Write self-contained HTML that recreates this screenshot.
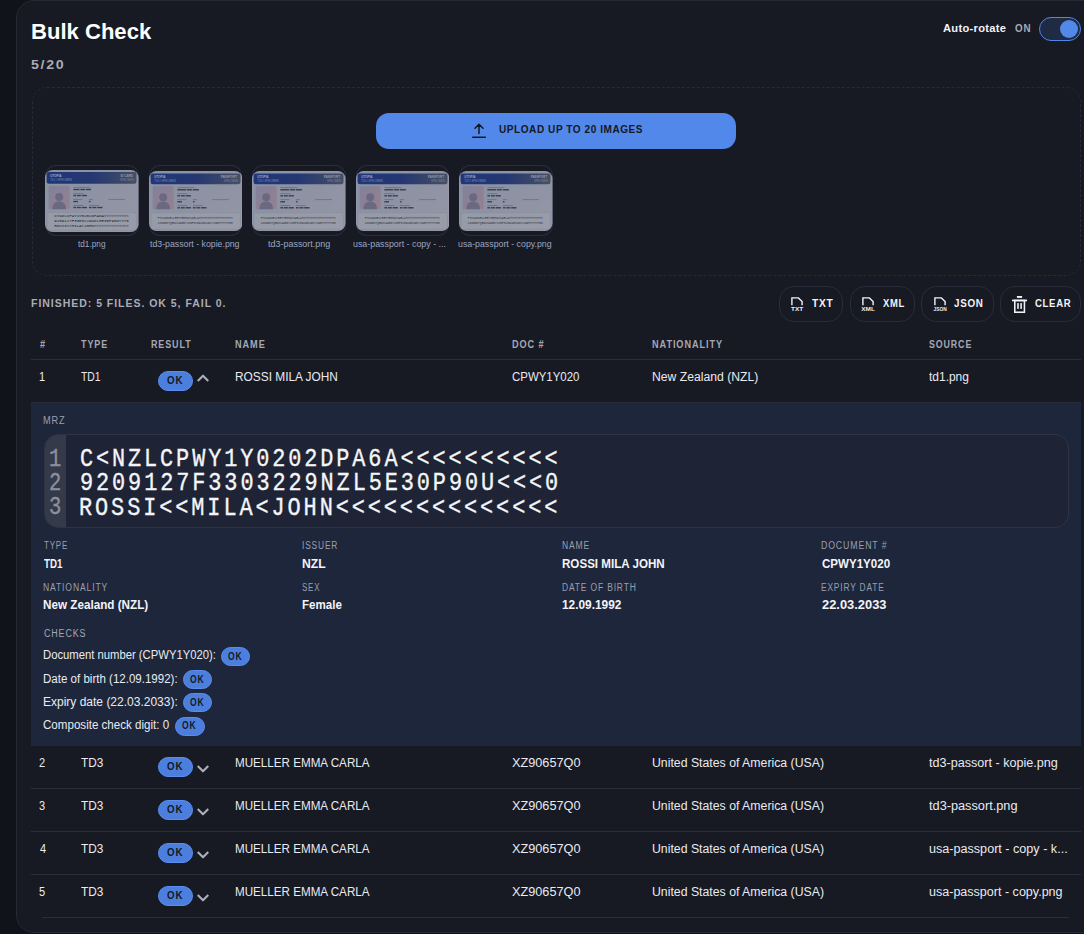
<!DOCTYPE html>
<html lang="en">
<head>
<meta charset="utf-8">
<title>Bulk Check</title>
<style>
*{box-sizing:border-box;margin:0;padding:0}
html,body{width:1084px;height:934px;overflow:hidden;background:#11131a;font-family:"Liberation Sans",sans-serif;color:#e8eaf0}
body{position:relative}
.t{position:absolute;white-space:pre;transform-origin:0 0;display:block}
.a{position:absolute}
#card{left:16px;top:0;width:1100px;height:933px;background:#171923;border:1px solid #262936;border-radius:18px}
#toggle{left:1039px;top:17px;width:42px;height:24px;border-radius:12px;border:1px solid #4f86e8;background:#1f2a44}
#toggle i{position:absolute;right:2px;top:2px;width:18px;height:18px;border-radius:50%;background:#5288e8}
#drop{left:32px;top:87px;width:1049px;height:189px;border:1px dashed #272a37;border-radius:15px}
#upload{left:376px;top:113px;width:360px;height:36px;border-radius:13px;background:#5288ea}
.thumb{top:165px;width:93.500px;height:71px;border-radius:11px;box-shadow:inset 0 0 0 1px #2a2d3b;background:#171923;overflow:hidden}
.btn{top:286px;height:36px;border:1px solid #292c3a;border-radius:15px;background:#171923}
.hl{left:31px;width:1049.500px;height:1px;background:#2a2d3b}
.ok{width:35px;height:20.500px;border-radius:10.250px;background:#4c7fdd;border:1px solid #5a8dee}
.oks{width:29.500px;height:19px;border-radius:9.500px;background:#4c7fdd;border:1px solid #5a8dee}
#panel{left:31px;top:402px;width:1050px;height:344px;background:#1e263b;border-top:1px solid #282c3a}
#mrz{left:43.500px;top:434px;width:1025px;height:93.500px;border:1px solid #2f3442;border-radius:14px;background:#1e2435;overflow:hidden}
#gut{left:0;top:0;width:21px;height:100%;background:#353a4a}
</style>
</head>
<body>
<main>
<div class="a" id="card"></div>
<div class="a" id="toggle"><i></i></div>
<div class="a" id="drop"></div>
<div class="a" id="upload"></div>
<svg class="a" style="left:471px;top:122px" width="16" height="18" viewBox="0 0 16 18" fill="none" stroke="#141824" stroke-width="1.500" stroke-linecap="round" stroke-linejoin="round"><path d="M8 11.500V2.500M4 6.300L8 2.300l4 4M1.700 15.300h12.600"/></svg>
<div class="a thumb" style="left:45px"><svg class="a" style="left:0;top:5px;opacity:.72" width="93.5" height="62" viewBox="0 0 93 62" preserveAspectRatio="none">
<defs>
<linearGradient id="h0" x1="0" x2="1" y1="0" y2="0"><stop offset="0" stop-color="#27429a"/><stop offset=".5" stop-color="#2a4392"/><stop offset="1" stop-color="#5b657e"/></linearGradient>
<linearGradient id="p0" x1="0" x2="1" y1="0" y2="1"><stop offset="0" stop-color="#a9a9cb"/><stop offset="1" stop-color="#c9a8b9"/></linearGradient>
<linearGradient id="b0" x1="0" x2="1" y1="0" y2="1"><stop offset="0" stop-color="#b4c0d6"/><stop offset="1" stop-color="#c6c6d8"/></linearGradient>
</defs>
<rect x="0" y="0" width="93" height="62" rx="7.5" fill="url(#b0)"/>
<rect x="1.6" y="2" width="89.4" height="11.75" rx="2.2" fill="url(#h0)"/>
<text transform="translate(5.2 6.7) scale(.1)" font-family="Liberation Sans" font-weight="bold" font-size="30" fill="#d5defa">UTOPIA</text>
<text transform="translate(5.2 10.7) scale(.1)" font-family="Liberation Sans" font-size="27" fill="#9fb2f0">TD1 / SPECIMEN</text>
<text transform="translate(87.5 6.7) scale(.1)" text-anchor="end" font-family="Liberation Sans" font-weight="bold" font-size="30" fill="#d3d8e8" opacity=".9">ID CARD</text>
<text transform="translate(88.5 10.7) scale(.1)" text-anchor="end" font-family="Liberation Sans" font-size="27" fill="#b9c1d9" opacity=".75">SPECIMEN</text>
<rect x="3.75" y="15.75" width="20.8" height="23.5" rx="1.6" fill="url(#p0)"/>
<circle cx="14.1" cy="26.95" r="4" fill="#8d88a8"/>
<path d="M7.300 39.25c0-5.600 3-7.800 6.800-7.800s6.800 2.200 6.800 7.800z" fill="#8d88a8"/>
<rect x="28.2" y="16.95" width="17" height=".9" fill="#6f7790" opacity=".6"/><rect x="28.20" y="18.85" width="6.16" height="1.35" fill="#1a1f30" opacity=".72"/><rect x="35.10" y="18.85" width="4.93" height="1.35" fill="#1a1f30" opacity=".72"/><rect x="40.77" y="18.85" width="4.93" height="1.35" fill="#1a1f30" opacity=".72"/>
<rect x="28.2" y="22.95" width="10" height=".9" fill="#6f7790" opacity=".6"/><rect x="28.20" y="24.85" width="2.65" height="1.35" fill="#1a1f30" opacity=".72"/><rect x="31.64" y="24.85" width="3.97" height="1.35" fill="#1a1f30" opacity=".72"/><rect x="36.41" y="24.85" width="5.29" height="1.35" fill="#1a1f30" opacity=".72"/>
<rect x="28.2" y="28.95" width="9" height=".9" fill="#6f7790" opacity=".6"/><rect x="28.20" y="30.85" width="4.60" height="1.35" fill="#1a1f30" opacity=".72"/>
<rect x="43.7" y="28.95" width="4" height=".9" fill="#6f7790" opacity=".6"/><rect x="43.70" y="30.85" width="1.60" height="1.35" fill="#1a1f30" opacity=".72"/>
<rect x="63" y="28.95" width="16.5" height=".9" fill="#6f7790" opacity=".6"/>
<rect x="28.2" y="34.95" width="10" height=".9" fill="#6f7790" opacity=".6"/><rect x="28.20" y="36.85" width="2.65" height="1.35" fill="#1a1f30" opacity=".72"/><rect x="31.64" y="36.85" width="3.97" height="1.35" fill="#1a1f30" opacity=".72"/><rect x="36.41" y="36.85" width="5.29" height="1.35" fill="#1a1f30" opacity=".72"/>
<rect x="43.7" y="34.95" width="10" height=".9" fill="#6f7790" opacity=".6"/><rect x="43.70" y="36.85" width="2.65" height="1.35" fill="#1a1f30" opacity=".72"/><rect x="47.14" y="36.85" width="3.97" height="1.35" fill="#1a1f30" opacity=".72"/><rect x="51.91" y="36.85" width="5.29" height="1.35" fill="#1a1f30" opacity=".72"/>
<rect x="2" y="42.5" width="88.8" height="17.5" rx="1.8" fill="#d3d6e2" opacity=".55" stroke="#9aa1b6" stroke-width=".4"/>
<text transform="translate(9.2 47.3) scale(.1)" textLength="742.0" lengthAdjust="spacingAndGlyphs" font-family="Liberation Mono" font-size="43.0" fill="#10141f" opacity="0.95">C&lt;NZLCPWY1Y0202DPA6A&lt;&lt;&lt;&lt;&lt;&lt;&lt;&lt;&lt;&lt;</text><text transform="translate(9.2 52.1) scale(.1)" textLength="742.0" lengthAdjust="spacingAndGlyphs" font-family="Liberation Mono" font-size="43.0" fill="#10141f" opacity="0.95">9209127F3303229NZL5E30P90U&lt;&lt;&lt;0</text><text transform="translate(9.2 57.0) scale(.1)" textLength="742.0" lengthAdjust="spacingAndGlyphs" font-family="Liberation Mono" font-size="43.0" fill="#10141f" opacity="0.95">ROSSI&lt;&lt;MILA&lt;JOHN&lt;&lt;&lt;&lt;&lt;&lt;&lt;&lt;&lt;&lt;&lt;&lt;&lt;&lt;</text>
</svg></div>
<div class="a thumb" style="left:148.5px"><svg class="a" style="left:0;top:6px;opacity:.72" width="93.5" height="60" viewBox="0 0 93 60" preserveAspectRatio="none">
<defs>
<linearGradient id="h1" x1="0" x2="1" y1="0" y2="0"><stop offset="0" stop-color="#27429a"/><stop offset=".5" stop-color="#2a4392"/><stop offset="1" stop-color="#5b657e"/></linearGradient>
<linearGradient id="p1" x1="0" x2="1" y1="0" y2="1"><stop offset="0" stop-color="#a9a9cb"/><stop offset="1" stop-color="#c9a8b9"/></linearGradient>
<linearGradient id="b1" x1="0" x2="1" y1="0" y2="1"><stop offset="0" stop-color="#b4c0d6"/><stop offset="1" stop-color="#c6c6d8"/></linearGradient>
</defs>
<rect x="0" y="0" width="93" height="60" rx="7.5" fill="url(#b1)"/>
<rect x="1.6" y="2.5" width="89.4" height="10.75" rx="2.2" fill="url(#h1)"/>
<text transform="translate(5.2 7.2) scale(.1)" font-family="Liberation Sans" font-weight="bold" font-size="30" fill="#d5defa">UTOPIA</text>
<text transform="translate(5.2 11.2) scale(.1)" font-family="Liberation Sans" font-size="27" fill="#9fb2f0">TD3 / SPECIMEN</text>
<text transform="translate(87.5 7.2) scale(.1)" text-anchor="end" font-family="Liberation Sans" font-weight="bold" font-size="30" fill="#d3d8e8" opacity=".9">PASSPORT</text>
<text transform="translate(88.5 11.2) scale(.1)" text-anchor="end" font-family="Liberation Sans" font-size="27" fill="#b9c1d9" opacity=".75">SPECIMEN</text>
<rect x="3.75" y="15" width="20.8" height="23.25" rx="1.6" fill="url(#p1)"/>
<circle cx="14.1" cy="26.2" r="4" fill="#8d88a8"/>
<path d="M7.300 38.25c0-5.600 3-7.800 6.800-7.800s6.800 2.200 6.800 7.800z" fill="#8d88a8"/>
<rect x="28.2" y="16.2" width="17" height=".9" fill="#6f7790" opacity=".6"/><rect x="28.20" y="18.10" width="8.75" height="1.35" fill="#1a1f30" opacity=".72"/><rect x="37.70" y="18.10" width="5.00" height="1.35" fill="#1a1f30" opacity=".72"/><rect x="43.45" y="18.10" width="6.25" height="1.35" fill="#1a1f30" opacity=".72"/>
<rect x="28.2" y="22.2" width="10" height=".9" fill="#6f7790" opacity=".6"/><rect x="28.20" y="24.10" width="2.65" height="1.35" fill="#1a1f30" opacity=".72"/><rect x="31.64" y="24.10" width="3.97" height="1.35" fill="#1a1f30" opacity=".72"/><rect x="36.41" y="24.10" width="5.29" height="1.35" fill="#1a1f30" opacity=".72"/>
<rect x="28.2" y="28.2" width="9" height=".9" fill="#6f7790" opacity=".6"/><rect x="28.20" y="30.10" width="4.60" height="1.35" fill="#1a1f30" opacity=".72"/>
<rect x="43.7" y="28.2" width="4" height=".9" fill="#6f7790" opacity=".6"/><rect x="43.70" y="30.10" width="1.60" height="1.35" fill="#1a1f30" opacity=".72"/>
<rect x="63" y="28.2" width="16.5" height=".9" fill="#6f7790" opacity=".6"/>
<rect x="28.2" y="34.2" width="10" height=".9" fill="#6f7790" opacity=".6"/><rect x="28.20" y="36.10" width="2.65" height="1.35" fill="#1a1f30" opacity=".72"/><rect x="31.64" y="36.10" width="3.97" height="1.35" fill="#1a1f30" opacity=".72"/><rect x="36.41" y="36.10" width="5.29" height="1.35" fill="#1a1f30" opacity=".72"/>
<rect x="43.7" y="34.2" width="10" height=".9" fill="#6f7790" opacity=".6"/><rect x="43.70" y="36.10" width="2.65" height="1.35" fill="#1a1f30" opacity=".72"/><rect x="47.14" y="36.10" width="3.97" height="1.35" fill="#1a1f30" opacity=".72"/><rect x="51.91" y="36.10" width="5.29" height="1.35" fill="#1a1f30" opacity=".72"/>
<rect x="2" y="41.75" width="88.8" height="16.5" rx="1.8" fill="#d3d6e2" opacity=".55" stroke="#9aa1b6" stroke-width=".4"/>
<text transform="translate(8.75 47.7) scale(.1)" textLength="745.0" lengthAdjust="spacingAndGlyphs" font-family="Liberation Mono" font-size="29.0" fill="#10141f" opacity="0.8">P&lt;USAMUELLER&lt;&lt;EMMA&lt;CARLA&lt;&lt;&lt;&lt;&lt;&lt;&lt;&lt;&lt;&lt;&lt;&lt;&lt;&lt;&lt;&lt;&lt;&lt;&lt;&lt;</text><text transform="translate(8.75 52.7) scale(.1)" textLength="745.0" lengthAdjust="spacingAndGlyphs" font-family="Liberation Mono" font-size="29.0" fill="#10141f" opacity="0.8">XZ90657Q00USA9007266F3109290SAMLYUWM&lt;&lt;&lt;&lt;&lt;&lt;08</text>
</svg></div>
<div class="a thumb" style="left:252px"><svg class="a" style="left:0;top:6px;opacity:.72" width="93.5" height="60" viewBox="0 0 93 60" preserveAspectRatio="none">
<defs>
<linearGradient id="h2" x1="0" x2="1" y1="0" y2="0"><stop offset="0" stop-color="#27429a"/><stop offset=".5" stop-color="#2a4392"/><stop offset="1" stop-color="#5b657e"/></linearGradient>
<linearGradient id="p2" x1="0" x2="1" y1="0" y2="1"><stop offset="0" stop-color="#a9a9cb"/><stop offset="1" stop-color="#c9a8b9"/></linearGradient>
<linearGradient id="b2" x1="0" x2="1" y1="0" y2="1"><stop offset="0" stop-color="#b4c0d6"/><stop offset="1" stop-color="#c6c6d8"/></linearGradient>
</defs>
<rect x="0" y="0" width="93" height="60" rx="7.5" fill="url(#b2)"/>
<rect x="1.6" y="2.5" width="89.4" height="10.75" rx="2.2" fill="url(#h2)"/>
<text transform="translate(5.2 7.2) scale(.1)" font-family="Liberation Sans" font-weight="bold" font-size="30" fill="#d5defa">UTOPIA</text>
<text transform="translate(5.2 11.2) scale(.1)" font-family="Liberation Sans" font-size="27" fill="#9fb2f0">TD3 / SPECIMEN</text>
<text transform="translate(87.5 7.2) scale(.1)" text-anchor="end" font-family="Liberation Sans" font-weight="bold" font-size="30" fill="#d3d8e8" opacity=".9">PASSPORT</text>
<text transform="translate(88.5 11.2) scale(.1)" text-anchor="end" font-family="Liberation Sans" font-size="27" fill="#b9c1d9" opacity=".75">SPECIMEN</text>
<rect x="3.75" y="15" width="20.8" height="23.25" rx="1.6" fill="url(#p2)"/>
<circle cx="14.1" cy="26.2" r="4" fill="#8d88a8"/>
<path d="M7.300 38.25c0-5.600 3-7.800 6.800-7.800s6.800 2.200 6.800 7.800z" fill="#8d88a8"/>
<rect x="28.2" y="16.2" width="17" height=".9" fill="#6f7790" opacity=".6"/><rect x="28.20" y="18.10" width="8.75" height="1.35" fill="#1a1f30" opacity=".72"/><rect x="37.70" y="18.10" width="5.00" height="1.35" fill="#1a1f30" opacity=".72"/><rect x="43.45" y="18.10" width="6.25" height="1.35" fill="#1a1f30" opacity=".72"/>
<rect x="28.2" y="22.2" width="10" height=".9" fill="#6f7790" opacity=".6"/><rect x="28.20" y="24.10" width="2.65" height="1.35" fill="#1a1f30" opacity=".72"/><rect x="31.64" y="24.10" width="3.97" height="1.35" fill="#1a1f30" opacity=".72"/><rect x="36.41" y="24.10" width="5.29" height="1.35" fill="#1a1f30" opacity=".72"/>
<rect x="28.2" y="28.2" width="9" height=".9" fill="#6f7790" opacity=".6"/><rect x="28.20" y="30.10" width="4.60" height="1.35" fill="#1a1f30" opacity=".72"/>
<rect x="43.7" y="28.2" width="4" height=".9" fill="#6f7790" opacity=".6"/><rect x="43.70" y="30.10" width="1.60" height="1.35" fill="#1a1f30" opacity=".72"/>
<rect x="63" y="28.2" width="16.5" height=".9" fill="#6f7790" opacity=".6"/>
<rect x="28.2" y="34.2" width="10" height=".9" fill="#6f7790" opacity=".6"/><rect x="28.20" y="36.10" width="2.65" height="1.35" fill="#1a1f30" opacity=".72"/><rect x="31.64" y="36.10" width="3.97" height="1.35" fill="#1a1f30" opacity=".72"/><rect x="36.41" y="36.10" width="5.29" height="1.35" fill="#1a1f30" opacity=".72"/>
<rect x="43.7" y="34.2" width="10" height=".9" fill="#6f7790" opacity=".6"/><rect x="43.70" y="36.10" width="2.65" height="1.35" fill="#1a1f30" opacity=".72"/><rect x="47.14" y="36.10" width="3.97" height="1.35" fill="#1a1f30" opacity=".72"/><rect x="51.91" y="36.10" width="5.29" height="1.35" fill="#1a1f30" opacity=".72"/>
<rect x="2" y="41.75" width="88.8" height="16.5" rx="1.8" fill="#d3d6e2" opacity=".55" stroke="#9aa1b6" stroke-width=".4"/>
<text transform="translate(8.75 47.7) scale(.1)" textLength="745.0" lengthAdjust="spacingAndGlyphs" font-family="Liberation Mono" font-size="29.0" fill="#10141f" opacity="0.8">P&lt;USAMUELLER&lt;&lt;EMMA&lt;CARLA&lt;&lt;&lt;&lt;&lt;&lt;&lt;&lt;&lt;&lt;&lt;&lt;&lt;&lt;&lt;&lt;&lt;&lt;&lt;&lt;</text><text transform="translate(8.75 52.7) scale(.1)" textLength="745.0" lengthAdjust="spacingAndGlyphs" font-family="Liberation Mono" font-size="29.0" fill="#10141f" opacity="0.8">XZ90657Q00USA9007266F3109290SAMLYUWM&lt;&lt;&lt;&lt;&lt;&lt;08</text>
</svg></div>
<div class="a thumb" style="left:355.5px"><svg class="a" style="left:0;top:6px;opacity:.72" width="93.5" height="60" viewBox="0 0 93 60" preserveAspectRatio="none">
<defs>
<linearGradient id="h3" x1="0" x2="1" y1="0" y2="0"><stop offset="0" stop-color="#27429a"/><stop offset=".5" stop-color="#2a4392"/><stop offset="1" stop-color="#5b657e"/></linearGradient>
<linearGradient id="p3" x1="0" x2="1" y1="0" y2="1"><stop offset="0" stop-color="#a9a9cb"/><stop offset="1" stop-color="#c9a8b9"/></linearGradient>
<linearGradient id="b3" x1="0" x2="1" y1="0" y2="1"><stop offset="0" stop-color="#b4c0d6"/><stop offset="1" stop-color="#c6c6d8"/></linearGradient>
</defs>
<rect x="0" y="0" width="93" height="60" rx="7.5" fill="url(#b3)"/>
<rect x="1.6" y="2.5" width="89.4" height="10.75" rx="2.2" fill="url(#h3)"/>
<text transform="translate(5.2 7.2) scale(.1)" font-family="Liberation Sans" font-weight="bold" font-size="30" fill="#d5defa">UTOPIA</text>
<text transform="translate(5.2 11.2) scale(.1)" font-family="Liberation Sans" font-size="27" fill="#9fb2f0">TD3 / SPECIMEN</text>
<text transform="translate(87.5 7.2) scale(.1)" text-anchor="end" font-family="Liberation Sans" font-weight="bold" font-size="30" fill="#d3d8e8" opacity=".9">PASSPORT</text>
<text transform="translate(88.5 11.2) scale(.1)" text-anchor="end" font-family="Liberation Sans" font-size="27" fill="#b9c1d9" opacity=".75">SPECIMEN</text>
<rect x="3.75" y="15" width="20.8" height="23.25" rx="1.6" fill="url(#p3)"/>
<circle cx="14.1" cy="26.2" r="4" fill="#8d88a8"/>
<path d="M7.300 38.25c0-5.600 3-7.800 6.800-7.800s6.800 2.200 6.800 7.800z" fill="#8d88a8"/>
<rect x="28.2" y="16.2" width="17" height=".9" fill="#6f7790" opacity=".6"/><rect x="28.20" y="18.10" width="8.75" height="1.35" fill="#1a1f30" opacity=".72"/><rect x="37.70" y="18.10" width="5.00" height="1.35" fill="#1a1f30" opacity=".72"/><rect x="43.45" y="18.10" width="6.25" height="1.35" fill="#1a1f30" opacity=".72"/>
<rect x="28.2" y="22.2" width="10" height=".9" fill="#6f7790" opacity=".6"/><rect x="28.20" y="24.10" width="2.65" height="1.35" fill="#1a1f30" opacity=".72"/><rect x="31.64" y="24.10" width="3.97" height="1.35" fill="#1a1f30" opacity=".72"/><rect x="36.41" y="24.10" width="5.29" height="1.35" fill="#1a1f30" opacity=".72"/>
<rect x="28.2" y="28.2" width="9" height=".9" fill="#6f7790" opacity=".6"/><rect x="28.20" y="30.10" width="4.60" height="1.35" fill="#1a1f30" opacity=".72"/>
<rect x="43.7" y="28.2" width="4" height=".9" fill="#6f7790" opacity=".6"/><rect x="43.70" y="30.10" width="1.60" height="1.35" fill="#1a1f30" opacity=".72"/>
<rect x="63" y="28.2" width="16.5" height=".9" fill="#6f7790" opacity=".6"/>
<rect x="28.2" y="34.2" width="10" height=".9" fill="#6f7790" opacity=".6"/><rect x="28.20" y="36.10" width="2.65" height="1.35" fill="#1a1f30" opacity=".72"/><rect x="31.64" y="36.10" width="3.97" height="1.35" fill="#1a1f30" opacity=".72"/><rect x="36.41" y="36.10" width="5.29" height="1.35" fill="#1a1f30" opacity=".72"/>
<rect x="43.7" y="34.2" width="10" height=".9" fill="#6f7790" opacity=".6"/><rect x="43.70" y="36.10" width="2.65" height="1.35" fill="#1a1f30" opacity=".72"/><rect x="47.14" y="36.10" width="3.97" height="1.35" fill="#1a1f30" opacity=".72"/><rect x="51.91" y="36.10" width="5.29" height="1.35" fill="#1a1f30" opacity=".72"/>
<rect x="2" y="41.75" width="88.8" height="16.5" rx="1.8" fill="#d3d6e2" opacity=".55" stroke="#9aa1b6" stroke-width=".4"/>
<text transform="translate(8.75 47.7) scale(.1)" textLength="745.0" lengthAdjust="spacingAndGlyphs" font-family="Liberation Mono" font-size="29.0" fill="#10141f" opacity="0.8">P&lt;USAMUELLER&lt;&lt;EMMA&lt;CARLA&lt;&lt;&lt;&lt;&lt;&lt;&lt;&lt;&lt;&lt;&lt;&lt;&lt;&lt;&lt;&lt;&lt;&lt;&lt;&lt;</text><text transform="translate(8.75 52.7) scale(.1)" textLength="745.0" lengthAdjust="spacingAndGlyphs" font-family="Liberation Mono" font-size="29.0" fill="#10141f" opacity="0.8">XZ90657Q00USA9007266F3109290SAMLYUWM&lt;&lt;&lt;&lt;&lt;&lt;08</text>
</svg></div>
<div class="a thumb" style="left:459px"><svg class="a" style="left:0;top:6px;opacity:.72" width="93.5" height="60" viewBox="0 0 93 60" preserveAspectRatio="none">
<defs>
<linearGradient id="h4" x1="0" x2="1" y1="0" y2="0"><stop offset="0" stop-color="#27429a"/><stop offset=".5" stop-color="#2a4392"/><stop offset="1" stop-color="#5b657e"/></linearGradient>
<linearGradient id="p4" x1="0" x2="1" y1="0" y2="1"><stop offset="0" stop-color="#a9a9cb"/><stop offset="1" stop-color="#c9a8b9"/></linearGradient>
<linearGradient id="b4" x1="0" x2="1" y1="0" y2="1"><stop offset="0" stop-color="#b4c0d6"/><stop offset="1" stop-color="#c6c6d8"/></linearGradient>
</defs>
<rect x="0" y="0" width="93" height="60" rx="7.5" fill="url(#b4)"/>
<rect x="1.6" y="2.5" width="89.4" height="10.75" rx="2.2" fill="url(#h4)"/>
<text transform="translate(5.2 7.2) scale(.1)" font-family="Liberation Sans" font-weight="bold" font-size="30" fill="#d5defa">UTOPIA</text>
<text transform="translate(5.2 11.2) scale(.1)" font-family="Liberation Sans" font-size="27" fill="#9fb2f0">TD3 / SPECIMEN</text>
<text transform="translate(87.5 7.2) scale(.1)" text-anchor="end" font-family="Liberation Sans" font-weight="bold" font-size="30" fill="#d3d8e8" opacity=".9">PASSPORT</text>
<text transform="translate(88.5 11.2) scale(.1)" text-anchor="end" font-family="Liberation Sans" font-size="27" fill="#b9c1d9" opacity=".75">SPECIMEN</text>
<rect x="3.75" y="15" width="20.8" height="23.25" rx="1.6" fill="url(#p4)"/>
<circle cx="14.1" cy="26.2" r="4" fill="#8d88a8"/>
<path d="M7.300 38.25c0-5.600 3-7.800 6.800-7.800s6.800 2.200 6.800 7.800z" fill="#8d88a8"/>
<rect x="28.2" y="16.2" width="17" height=".9" fill="#6f7790" opacity=".6"/><rect x="28.20" y="18.10" width="8.75" height="1.35" fill="#1a1f30" opacity=".72"/><rect x="37.70" y="18.10" width="5.00" height="1.35" fill="#1a1f30" opacity=".72"/><rect x="43.45" y="18.10" width="6.25" height="1.35" fill="#1a1f30" opacity=".72"/>
<rect x="28.2" y="22.2" width="10" height=".9" fill="#6f7790" opacity=".6"/><rect x="28.20" y="24.10" width="2.65" height="1.35" fill="#1a1f30" opacity=".72"/><rect x="31.64" y="24.10" width="3.97" height="1.35" fill="#1a1f30" opacity=".72"/><rect x="36.41" y="24.10" width="5.29" height="1.35" fill="#1a1f30" opacity=".72"/>
<rect x="28.2" y="28.2" width="9" height=".9" fill="#6f7790" opacity=".6"/><rect x="28.20" y="30.10" width="4.60" height="1.35" fill="#1a1f30" opacity=".72"/>
<rect x="43.7" y="28.2" width="4" height=".9" fill="#6f7790" opacity=".6"/><rect x="43.70" y="30.10" width="1.60" height="1.35" fill="#1a1f30" opacity=".72"/>
<rect x="63" y="28.2" width="16.5" height=".9" fill="#6f7790" opacity=".6"/>
<rect x="28.2" y="34.2" width="10" height=".9" fill="#6f7790" opacity=".6"/><rect x="28.20" y="36.10" width="2.65" height="1.35" fill="#1a1f30" opacity=".72"/><rect x="31.64" y="36.10" width="3.97" height="1.35" fill="#1a1f30" opacity=".72"/><rect x="36.41" y="36.10" width="5.29" height="1.35" fill="#1a1f30" opacity=".72"/>
<rect x="43.7" y="34.2" width="10" height=".9" fill="#6f7790" opacity=".6"/><rect x="43.70" y="36.10" width="2.65" height="1.35" fill="#1a1f30" opacity=".72"/><rect x="47.14" y="36.10" width="3.97" height="1.35" fill="#1a1f30" opacity=".72"/><rect x="51.91" y="36.10" width="5.29" height="1.35" fill="#1a1f30" opacity=".72"/>
<rect x="2" y="41.75" width="88.8" height="16.5" rx="1.8" fill="#d3d6e2" opacity=".55" stroke="#9aa1b6" stroke-width=".4"/>
<text transform="translate(8.75 47.7) scale(.1)" textLength="745.0" lengthAdjust="spacingAndGlyphs" font-family="Liberation Mono" font-size="29.0" fill="#10141f" opacity="0.8">P&lt;USAMUELLER&lt;&lt;EMMA&lt;CARLA&lt;&lt;&lt;&lt;&lt;&lt;&lt;&lt;&lt;&lt;&lt;&lt;&lt;&lt;&lt;&lt;&lt;&lt;&lt;&lt;</text><text transform="translate(8.75 52.7) scale(.1)" textLength="745.0" lengthAdjust="spacingAndGlyphs" font-family="Liberation Mono" font-size="29.0" fill="#10141f" opacity="0.8">XZ90657Q00USA9007266F3109290SAMLYUWM&lt;&lt;&lt;&lt;&lt;&lt;08</text>
</svg></div>
<div class="a btn" style="left:779px;width:64px"></div>
<div class="a btn" style="left:850px;width:65px"></div>
<div class="a btn" style="left:921px;width:73px"></div>
<div class="a btn" style="left:1000px;width:81px"></div>
<svg class="a" style="left:788.3px;top:295px" width="18" height="18" viewBox="0 0 18 18"><path d="M3.900 10.200V2.900h6.500l3.700 3.700v3.600" fill="none" stroke="#f1f2f5" stroke-width="1.4"/><text x="9.100" y="16.050" text-anchor="middle" textLength="12.2" lengthAdjust="spacingAndGlyphs" font-family="Liberation Sans" font-weight="bold" font-size="5.5" fill="#f1f2f5">TXT</text></svg>
<svg class="a" style="left:858.6px;top:295px" width="18" height="18" viewBox="0 0 18 18"><path d="M3.900 10.200V2.900h6.500l3.700 3.700v3.600" fill="none" stroke="#f1f2f5" stroke-width="1.4"/><text x="9.100" y="16.050" text-anchor="middle" textLength="13.6" lengthAdjust="spacingAndGlyphs" font-family="Liberation Sans" font-weight="bold" font-size="5.5" fill="#f1f2f5">XML</text></svg>
<svg class="a" style="left:930.7px;top:295px" width="18" height="18" viewBox="0 0 18 18"><path d="M3.900 10.200V2.900h6.500l3.700 3.700v3.600" fill="none" stroke="#f1f2f5" stroke-width="1.4"/><text x="9.100" y="16.050" text-anchor="middle" textLength="13.2" lengthAdjust="spacingAndGlyphs" font-family="Liberation Sans" font-weight="bold" font-size="5.3" fill="#f1f2f5">JSON</text></svg>
<svg class="a" style="left:1010px;top:294px" width="20" height="22" viewBox="0 0 20 22" fill="#f1f2f5"><rect x="6.900" y="2" width="5.200" height="1.900"/><rect x="2" y="5.600" width="15" height="1.700"/><rect x="4.780" y="6.500" width="9.650" height="11.730" fill="none" stroke="#f1f2f5" stroke-width="1.550"/><rect x="7.200" y="9.100" width="1.600" height="5.800"/><rect x="10.300" y="9.100" width="1.600" height="5.800"/></svg>
<div class="a hl" style="top:359px"></div>
<div class="a hl" style="top:788px"></div>
<div class="a hl" style="top:831px"></div>
<div class="a hl" style="top:874px"></div>
<div class="a hl" style="top:917px;left:42px;width:1027px"></div>
<div class="a" id="panel"></div>
<div class="a" id="mrz"><div class="a" id="gut"></div></div>
<div class="a ok" style="left:158px;top:370.750px"></div>
<svg class="a" style="left:196.2px;top:373.4px" width="14" height="10" viewBox="0 0 14 10" fill="none" stroke="#adb0bc" stroke-width="2.100" stroke-linecap="square" stroke-linejoin="round"><path d="M2.500 7.200L7 2.700l4.500 4.500"/></svg>
<div class="a ok" style="left:158px;top:756.75px"></div>
<svg class="a" style="left:196.2px;top:764.25px" width="14" height="10" viewBox="0 0 14 10" fill="none" stroke="#adb0bc" stroke-width="2.100" stroke-linecap="square" stroke-linejoin="round"><path d="M2.500 2.800L7 7.300l4.500-4.500"/></svg>
<div class="a ok" style="left:158px;top:799.75px"></div>
<svg class="a" style="left:196.2px;top:807.25px" width="14" height="10" viewBox="0 0 14 10" fill="none" stroke="#adb0bc" stroke-width="2.100" stroke-linecap="square" stroke-linejoin="round"><path d="M2.500 2.800L7 7.300l4.500-4.500"/></svg>
<div class="a ok" style="left:158px;top:842.75px"></div>
<svg class="a" style="left:196.2px;top:850.25px" width="14" height="10" viewBox="0 0 14 10" fill="none" stroke="#adb0bc" stroke-width="2.100" stroke-linecap="square" stroke-linejoin="round"><path d="M2.500 2.800L7 7.300l4.500-4.500"/></svg>
<div class="a ok" style="left:158px;top:885.75px"></div>
<svg class="a" style="left:196.2px;top:893.25px" width="14" height="10" viewBox="0 0 14 10" fill="none" stroke="#adb0bc" stroke-width="2.100" stroke-linecap="square" stroke-linejoin="round"><path d="M2.500 2.800L7 7.300l4.500-4.500"/></svg>
<div class="a oks" style="left:220.75px;top:647px;width:29.5px"></div>
<div class="a oks" style="left:182.75px;top:670.25px;width:29.5px"></div>
<div class="a oks" style="left:182.75px;top:693.25px;width:29.5px"></div>
<div class="a oks" style="left:174.75px;top:716.5px;width:30.5px"></div>
<span class="t" style="left:31.01px;top:19.00px;line-height:26px;color:#ffffff;font-family:'Liberation Sans',sans-serif;font-size:22px;font-weight:bold;letter-spacing:0px;transform:scaleX(1.0031)">Bulk Check</span>
<span class="t" style="left:31.31px;top:55.80px;line-height:17px;color:#a9acb6;font-family:'Liberation Sans',sans-serif;font-size:13px;font-weight:bold;letter-spacing:1.5px;transform:scaleX(1.0934)">5/20</span>
<span class="t" style="left:943.03px;top:21.20px;line-height:15px;color:#f3f4f7;font-family:'Liberation Sans',sans-serif;font-size:11px;font-weight:bold;letter-spacing:0.3px;transform:scaleX(1.0128)">Auto-rotate</span>
<span class="t" style="left:1015.01px;top:21.20px;line-height:15px;color:#a9acb6;font-family:'Liberation Sans',sans-serif;font-size:11px;font-weight:bold;letter-spacing:1px;transform:scaleX(0.8900)">ON</span>
<span class="t" style="left:499.45px;top:121.60px;line-height:15px;color:#141824;font-family:'Liberation Sans',sans-serif;font-size:11px;font-weight:bold;letter-spacing:0.6px;transform:scaleX(0.9140)">UPLOAD UP TO 20 IMAGES</span>
<span class="t" style="left:30.59px;top:295.50px;line-height:15px;color:#a9acb6;font-family:'Liberation Sans',sans-serif;font-size:11px;font-weight:bold;letter-spacing:1.0px;transform:scaleX(0.9571)">FINISHED: 5 FILES. OK 5, FAIL 0.</span>
<span class="t" style="left:811.88px;top:296.20px;line-height:15px;color:#f3f4f7;font-family:'Liberation Sans',sans-serif;font-size:11px;font-weight:bold;letter-spacing:0.8px;transform:scaleX(0.9288)">TXT</span>
<span class="t" style="left:882.53px;top:296.20px;line-height:15px;color:#f3f4f7;font-family:'Liberation Sans',sans-serif;font-size:11px;font-weight:bold;letter-spacing:0.8px;transform:scaleX(0.8585)">XML</span>
<span class="t" style="left:954.33px;top:296.20px;line-height:15px;color:#f3f4f7;font-family:'Liberation Sans',sans-serif;font-size:11px;font-weight:bold;letter-spacing:0.8px;transform:scaleX(0.8940)">JSON</span>
<span class="t" style="left:1034.81px;top:296.20px;line-height:15px;color:#f3f4f7;font-family:'Liberation Sans',sans-serif;font-size:11px;font-weight:bold;letter-spacing:0.8px;transform:scaleX(0.8667)">CLEAR</span>
<span class="t" style="left:39.53px;top:338.40px;line-height:14px;color:#a4a8b3;font-family:'Liberation Sans',sans-serif;font-size:10px;font-weight:bold;letter-spacing:1.0px;transform:scaleX(0.9200)">#</span>
<span class="t" style="left:81.35px;top:338.40px;line-height:14px;color:#a4a8b3;font-family:'Liberation Sans',sans-serif;font-size:10px;font-weight:bold;letter-spacing:1.0px;transform:scaleX(0.8989)">TYPE</span>
<span class="t" style="left:150.68px;top:338.40px;line-height:14px;color:#a4a8b3;font-family:'Liberation Sans',sans-serif;font-size:10px;font-weight:bold;letter-spacing:1.0px;transform:scaleX(0.8964)">RESULT</span>
<span class="t" style="left:234.92px;top:338.40px;line-height:14px;color:#a4a8b3;font-family:'Liberation Sans',sans-serif;font-size:10px;font-weight:bold;letter-spacing:1.0px;transform:scaleX(0.9174)">NAME</span>
<span class="t" style="left:511.92px;top:338.40px;line-height:14px;color:#a4a8b3;font-family:'Liberation Sans',sans-serif;font-size:10px;font-weight:bold;letter-spacing:1.0px;transform:scaleX(0.9163)">DOC #</span>
<span class="t" style="left:651.92px;top:338.40px;line-height:14px;color:#a4a8b3;font-family:'Liberation Sans',sans-serif;font-size:10px;font-weight:bold;letter-spacing:1.0px;transform:scaleX(0.9159)">NATIONALITY</span>
<span class="t" style="left:929.26px;top:338.40px;line-height:14px;color:#a4a8b3;font-family:'Liberation Sans',sans-serif;font-size:10px;font-weight:bold;letter-spacing:1.0px;transform:scaleX(0.8851)">SOURCE</span>
<span class="t" style="left:38.62px;top:369.00px;line-height:16px;color:#e9ebf0;font-family:'Liberation Sans',sans-serif;font-size:12px;font-weight:normal;letter-spacing:0px;transform:scaleX(0.9200)">1</span>
<span class="t" style="left:81.28px;top:369.00px;line-height:16px;color:#e9ebf0;font-family:'Liberation Sans',sans-serif;font-size:12px;font-weight:normal;letter-spacing:0px;transform:scaleX(0.8622)">TD1</span>
<span class="t" style="left:234.66px;top:369.00px;line-height:16px;color:#e9ebf0;font-family:'Liberation Sans',sans-serif;font-size:12px;font-weight:normal;letter-spacing:0px;transform:scaleX(0.9894)">ROSSI MILA JOHN</span>
<span class="t" style="left:511.94px;top:369.00px;line-height:16px;color:#e9ebf0;font-family:'Liberation Sans',sans-serif;font-size:12px;font-weight:normal;letter-spacing:0px;transform:scaleX(0.9532)">CPWY1Y020</span>
<span class="t" style="left:651.64px;top:369.00px;line-height:16px;color:#e9ebf0;font-family:'Liberation Sans',sans-serif;font-size:12px;font-weight:normal;letter-spacing:0px;transform:scaleX(1.0159)">New Zealand (NZL)</span>
<span class="t" style="left:929.30px;top:368.70px;line-height:16px;color:#e9ebf0;font-family:'Liberation Sans',sans-serif;font-size:12px;font-weight:normal;letter-spacing:0px;transform:scaleX(0.9969)">td1.png</span>
<span class="t" style="left:39.34px;top:754.95px;line-height:16px;color:#e9ebf0;font-family:'Liberation Sans',sans-serif;font-size:12px;font-weight:normal;letter-spacing:0px;transform:scaleX(0.9200)">2</span>
<span class="t" style="left:81.28px;top:754.95px;line-height:16px;color:#e9ebf0;font-family:'Liberation Sans',sans-serif;font-size:12px;font-weight:normal;letter-spacing:0px;transform:scaleX(0.9854)">TD3</span>
<span class="t" style="left:234.67px;top:754.95px;line-height:16px;color:#e9ebf0;font-family:'Liberation Sans',sans-serif;font-size:12px;font-weight:normal;letter-spacing:0px;transform:scaleX(0.9698)">MUELLER EMMA CARLA</span>
<span class="t" style="left:511.93px;top:754.95px;line-height:16px;color:#e9ebf0;font-family:'Liberation Sans',sans-serif;font-size:12px;font-weight:normal;letter-spacing:0px;transform:scaleX(1.0578)">XZ90657Q0</span>
<span class="t" style="left:651.69px;top:754.95px;line-height:16px;color:#e9ebf0;font-family:'Liberation Sans',sans-serif;font-size:12px;font-weight:normal;letter-spacing:0px;transform:scaleX(1.0235)">United States of America (USA)</span>
<span class="t" style="left:929.31px;top:754.65px;line-height:16px;color:#e9ebf0;font-family:'Liberation Sans',sans-serif;font-size:12px;font-weight:normal;letter-spacing:0px;transform:scaleX(1.0495)">td3-passort - kopie.png</span>
<span class="t" style="left:39.31px;top:797.95px;line-height:16px;color:#e9ebf0;font-family:'Liberation Sans',sans-serif;font-size:12px;font-weight:normal;letter-spacing:0px;transform:scaleX(0.9200)">3</span>
<span class="t" style="left:81.28px;top:797.95px;line-height:16px;color:#e9ebf0;font-family:'Liberation Sans',sans-serif;font-size:12px;font-weight:normal;letter-spacing:0px;transform:scaleX(0.9854)">TD3</span>
<span class="t" style="left:234.67px;top:797.95px;line-height:16px;color:#e9ebf0;font-family:'Liberation Sans',sans-serif;font-size:12px;font-weight:normal;letter-spacing:0px;transform:scaleX(0.9698)">MUELLER EMMA CARLA</span>
<span class="t" style="left:511.93px;top:797.95px;line-height:16px;color:#e9ebf0;font-family:'Liberation Sans',sans-serif;font-size:12px;font-weight:normal;letter-spacing:0px;transform:scaleX(1.0578)">XZ90657Q0</span>
<span class="t" style="left:651.69px;top:797.95px;line-height:16px;color:#e9ebf0;font-family:'Liberation Sans',sans-serif;font-size:12px;font-weight:normal;letter-spacing:0px;transform:scaleX(1.0235)">United States of America (USA)</span>
<span class="t" style="left:929.31px;top:797.65px;line-height:16px;color:#e9ebf0;font-family:'Liberation Sans',sans-serif;font-size:12px;font-weight:normal;letter-spacing:0px;transform:scaleX(1.0617)">td3-passort.png</span>
<span class="t" style="left:39.54px;top:840.95px;line-height:16px;color:#e9ebf0;font-family:'Liberation Sans',sans-serif;font-size:12px;font-weight:normal;letter-spacing:0px;transform:scaleX(0.9200)">4</span>
<span class="t" style="left:81.28px;top:840.95px;line-height:16px;color:#e9ebf0;font-family:'Liberation Sans',sans-serif;font-size:12px;font-weight:normal;letter-spacing:0px;transform:scaleX(0.9854)">TD3</span>
<span class="t" style="left:234.67px;top:840.95px;line-height:16px;color:#e9ebf0;font-family:'Liberation Sans',sans-serif;font-size:12px;font-weight:normal;letter-spacing:0px;transform:scaleX(0.9698)">MUELLER EMMA CARLA</span>
<span class="t" style="left:511.93px;top:840.95px;line-height:16px;color:#e9ebf0;font-family:'Liberation Sans',sans-serif;font-size:12px;font-weight:normal;letter-spacing:0px;transform:scaleX(1.0578)">XZ90657Q0</span>
<span class="t" style="left:651.69px;top:840.95px;line-height:16px;color:#e9ebf0;font-family:'Liberation Sans',sans-serif;font-size:12px;font-weight:normal;letter-spacing:0px;transform:scaleX(1.0235)">United States of America (USA)</span>
<span class="t" style="left:929.07px;top:840.65px;line-height:16px;color:#e9ebf0;font-family:'Liberation Sans',sans-serif;font-size:12px;font-weight:normal;letter-spacing:0px;transform:scaleX(1.0499)">usa-passport - copy - k...</span>
<span class="t" style="left:39.30px;top:883.95px;line-height:16px;color:#e9ebf0;font-family:'Liberation Sans',sans-serif;font-size:12px;font-weight:normal;letter-spacing:0px;transform:scaleX(0.9200)">5</span>
<span class="t" style="left:81.28px;top:883.95px;line-height:16px;color:#e9ebf0;font-family:'Liberation Sans',sans-serif;font-size:12px;font-weight:normal;letter-spacing:0px;transform:scaleX(0.9854)">TD3</span>
<span class="t" style="left:234.67px;top:883.95px;line-height:16px;color:#e9ebf0;font-family:'Liberation Sans',sans-serif;font-size:12px;font-weight:normal;letter-spacing:0px;transform:scaleX(0.9698)">MUELLER EMMA CARLA</span>
<span class="t" style="left:511.93px;top:883.95px;line-height:16px;color:#e9ebf0;font-family:'Liberation Sans',sans-serif;font-size:12px;font-weight:normal;letter-spacing:0px;transform:scaleX(1.0578)">XZ90657Q0</span>
<span class="t" style="left:651.69px;top:883.95px;line-height:16px;color:#e9ebf0;font-family:'Liberation Sans',sans-serif;font-size:12px;font-weight:normal;letter-spacing:0px;transform:scaleX(1.0235)">United States of America (USA)</span>
<span class="t" style="left:928.50px;top:883.65px;line-height:16px;color:#e9ebf0;font-family:'Liberation Sans',sans-serif;font-size:12px;font-weight:normal;letter-spacing:0px;transform:scaleX(1.0447)">usa-passport - copy.png</span>
<span class="t" style="left:43.07px;top:414.25px;line-height:14px;color:#9a9fae;font-family:'Liberation Sans',sans-serif;font-size:10px;font-weight:normal;letter-spacing:1.0px;transform:scaleX(0.9173)">MRZ</span>
<span class="t" style="left:43.78px;top:539.25px;line-height:14px;color:#9a9fae;font-family:'Liberation Sans',sans-serif;font-size:10px;font-weight:normal;letter-spacing:1.0px;transform:scaleX(0.7990)">TYPE</span>
<span class="t" style="left:302.33px;top:539.25px;line-height:14px;color:#9a9fae;font-family:'Liberation Sans',sans-serif;font-size:10px;font-weight:normal;letter-spacing:1.0px;transform:scaleX(0.8369)">ISSUER</span>
<span class="t" style="left:561.87px;top:539.25px;line-height:14px;color:#9a9fae;font-family:'Liberation Sans',sans-serif;font-size:10px;font-weight:normal;letter-spacing:1.0px;transform:scaleX(0.8539)">NAME</span>
<span class="t" style="left:821.10px;top:539.25px;line-height:14px;color:#9a9fae;font-family:'Liberation Sans',sans-serif;font-size:10px;font-weight:normal;letter-spacing:1.0px;transform:scaleX(0.8748)">DOCUMENT #</span>
<span class="t" style="left:43.82px;top:556.25px;line-height:16px;color:#f3f4f7;font-family:'Liberation Sans',sans-serif;font-size:12px;font-weight:bold;letter-spacing:0px;transform:scaleX(0.8118)">TD1</span>
<span class="t" style="left:302.27px;top:556.25px;line-height:16px;color:#f3f4f7;font-family:'Liberation Sans',sans-serif;font-size:12px;font-weight:bold;letter-spacing:0px;transform:scaleX(1.0119)">NZL</span>
<span class="t" style="left:561.80px;top:556.25px;line-height:16px;color:#f3f4f7;font-family:'Liberation Sans',sans-serif;font-size:12px;font-weight:bold;letter-spacing:0px;transform:scaleX(0.9664)">ROSSI MILA JOHN</span>
<span class="t" style="left:821.76px;top:556.25px;line-height:16px;color:#f3f4f7;font-family:'Liberation Sans',sans-serif;font-size:12px;font-weight:bold;letter-spacing:0px;transform:scaleX(0.9629)">CPWY1Y020</span>
<span class="t" style="left:43.11px;top:581.00px;line-height:14px;color:#9a9fae;font-family:'Liberation Sans',sans-serif;font-size:10px;font-weight:normal;letter-spacing:1.0px;transform:scaleX(0.8589)">NATIONALITY</span>
<span class="t" style="left:302.49px;top:581.00px;line-height:14px;color:#9a9fae;font-family:'Liberation Sans',sans-serif;font-size:10px;font-weight:normal;letter-spacing:1.0px;transform:scaleX(0.7951)">SEX</span>
<span class="t" style="left:561.87px;top:581.00px;line-height:14px;color:#9a9fae;font-family:'Liberation Sans',sans-serif;font-size:10px;font-weight:normal;letter-spacing:1.0px;transform:scaleX(0.8462)">DATE OF BIRTH</span>
<span class="t" style="left:821.13px;top:581.00px;line-height:14px;color:#9a9fae;font-family:'Liberation Sans',sans-serif;font-size:10px;font-weight:normal;letter-spacing:1.0px;transform:scaleX(0.8374)">EXPIRY DATE</span>
<span class="t" style="left:43.05px;top:597.10px;line-height:16px;color:#f3f4f7;font-family:'Liberation Sans',sans-serif;font-size:12px;font-weight:bold;letter-spacing:0px;transform:scaleX(0.9740)">New Zealand (NZL)</span>
<span class="t" style="left:302.30px;top:597.10px;line-height:16px;color:#f3f4f7;font-family:'Liberation Sans',sans-serif;font-size:12px;font-weight:bold;letter-spacing:0px;transform:scaleX(0.9638)">Female</span>
<span class="t" style="left:561.81px;top:597.10px;line-height:16px;color:#f3f4f7;font-family:'Liberation Sans',sans-serif;font-size:12px;font-weight:bold;letter-spacing:0px;transform:scaleX(0.9896)">12.09.1992</span>
<span class="t" style="left:821.78px;top:597.10px;line-height:16px;color:#f3f4f7;font-family:'Liberation Sans',sans-serif;font-size:12px;font-weight:bold;letter-spacing:0px;transform:scaleX(1.0733)">22.03.2033</span>
<span class="t" style="left:44.05px;top:627.00px;line-height:14px;color:#a3a7b4;font-family:'Liberation Sans',sans-serif;font-size:10px;font-weight:normal;letter-spacing:1.0px;transform:scaleX(0.8884)">CHECKS</span>
<span class="t" style="left:42.95px;top:647.40px;line-height:16px;color:#e9ebf0;font-family:'Liberation Sans',sans-serif;font-size:12px;font-weight:normal;letter-spacing:0px;transform:scaleX(0.9391)">Document number (CPWY1Y020):</span>
<span class="t" style="left:42.93px;top:670.90px;line-height:16px;color:#e9ebf0;font-family:'Liberation Sans',sans-serif;font-size:12px;font-weight:normal;letter-spacing:0px;transform:scaleX(0.9613)">Date of birth (12.09.1992):</span>
<span class="t" style="left:42.90px;top:694.20px;line-height:16px;color:#e9ebf0;font-family:'Liberation Sans',sans-serif;font-size:12px;font-weight:normal;letter-spacing:0px;transform:scaleX(1.0002)">Expiry date (22.03.2033):</span>
<span class="t" style="left:43.19px;top:717.40px;line-height:16px;color:#e9ebf0;font-family:'Liberation Sans',sans-serif;font-size:12px;font-weight:normal;letter-spacing:0px;transform:scaleX(0.9652)">Composite check digit: 0</span>
<span class="t" style="left:167.11px;top:373.25px;line-height:15px;color:#141824;font-family:'Liberation Sans',sans-serif;font-size:11px;font-weight:bold;letter-spacing:1.0px;transform:scaleX(0.8817)">OK</span>
<span class="t" style="left:167.11px;top:759.40px;line-height:15px;color:#141824;font-family:'Liberation Sans',sans-serif;font-size:11px;font-weight:bold;letter-spacing:1.0px;transform:scaleX(0.8817)">OK</span>
<span class="t" style="left:167.11px;top:802.40px;line-height:15px;color:#141824;font-family:'Liberation Sans',sans-serif;font-size:11px;font-weight:bold;letter-spacing:1.0px;transform:scaleX(0.8817)">OK</span>
<span class="t" style="left:167.11px;top:845.40px;line-height:15px;color:#141824;font-family:'Liberation Sans',sans-serif;font-size:11px;font-weight:bold;letter-spacing:1.0px;transform:scaleX(0.8817)">OK</span>
<span class="t" style="left:167.11px;top:888.40px;line-height:15px;color:#141824;font-family:'Liberation Sans',sans-serif;font-size:11px;font-weight:bold;letter-spacing:1.0px;transform:scaleX(0.8817)">OK</span>
<span class="t" style="left:228.27px;top:649.90px;line-height:14px;color:#141824;font-family:'Liberation Sans',sans-serif;font-size:10px;font-weight:bold;letter-spacing:1.0px;transform:scaleX(0.8551)">OK</span>
<span class="t" style="left:190.27px;top:673.15px;line-height:14px;color:#141824;font-family:'Liberation Sans',sans-serif;font-size:10px;font-weight:bold;letter-spacing:1.0px;transform:scaleX(0.8551)">OK</span>
<span class="t" style="left:190.27px;top:696.15px;line-height:14px;color:#141824;font-family:'Liberation Sans',sans-serif;font-size:10px;font-weight:bold;letter-spacing:1.0px;transform:scaleX(0.8551)">OK</span>
<span class="t" style="left:182.27px;top:719.40px;line-height:14px;color:#141824;font-family:'Liberation Sans',sans-serif;font-size:10px;font-weight:bold;letter-spacing:1.0px;transform:scaleX(0.8551)">OK</span>
<span class="t" style="left:78.05px;top:237.60px;line-height:13px;color:#9aa7c2;font-family:'Liberation Sans',sans-serif;font-size:9px;font-weight:normal;letter-spacing:0px;transform:scaleX(0.9149)">td1.png</span>
<span class="t" style="left:150.06px;top:237.60px;line-height:13px;color:#9aa7c2;font-family:'Liberation Sans',sans-serif;font-size:9px;font-weight:normal;letter-spacing:0px;transform:scaleX(0.9720)">td3-passort - kopie.png</span>
<span class="t" style="left:267.56px;top:237.60px;line-height:13px;color:#9aa7c2;font-family:'Liberation Sans',sans-serif;font-size:9px;font-weight:normal;letter-spacing:0px;transform:scaleX(0.9958)">td3-passort.png</span>
<span class="t" style="left:352.98px;top:237.60px;line-height:13px;color:#9aa7c2;font-family:'Liberation Sans',sans-serif;font-size:9px;font-weight:normal;letter-spacing:0px;transform:scaleX(0.9831)">usa-passport - copy - ...</span>
<span class="t" style="left:457.98px;top:237.60px;line-height:13px;color:#9aa7c2;font-family:'Liberation Sans',sans-serif;font-size:9px;font-weight:normal;letter-spacing:0px;transform:scaleX(0.9766)">usa-passport - copy.png</span>
<span class="t" style="left:79.69px;top:445.05px;line-height:29px;color:#f4f5f8;font-family:'Liberation Mono',monospace;font-size:25px;font-weight:normal;letter-spacing:3.3px;-webkit-text-stroke:.35px #f4f5f8;transform:scaleX(0.8753)">C&lt;NZLCPWY1Y0202DPA6A&lt;&lt;&lt;&lt;&lt;&lt;&lt;&lt;&lt;&lt;</span>
<span class="t" style="left:79.75px;top:469.30px;line-height:29px;color:#f4f5f8;font-family:'Liberation Mono',monospace;font-size:25px;font-weight:normal;letter-spacing:3.3px;-webkit-text-stroke:.35px #f4f5f8;transform:scaleX(0.8763)">9209127F3303229NZL5E30P90U&lt;&lt;&lt;0</span>
<span class="t" style="left:79.03px;top:493.55px;line-height:29px;color:#f4f5f8;font-family:'Liberation Mono',monospace;font-size:25px;font-weight:normal;letter-spacing:3.3px;-webkit-text-stroke:.35px #f4f5f8;transform:scaleX(0.8765)">ROSSI&lt;&lt;MILA&lt;JOHN&lt;&lt;&lt;&lt;&lt;&lt;&lt;&lt;&lt;&lt;&lt;&lt;&lt;&lt;</span>
<span class="t" style="left:48.91px;top:444.91px;line-height:29px;color:#8c909d;font-family:'Liberation Mono',monospace;font-size:25px;font-weight:normal;letter-spacing:0px;-webkit-text-stroke:.3px #8c909d;transform:scaleX(0.8200)">1</span>
<span class="t" style="left:49.21px;top:469.16px;line-height:29px;color:#8c909d;font-family:'Liberation Mono',monospace;font-size:25px;font-weight:normal;letter-spacing:0px;-webkit-text-stroke:.3px #8c909d;transform:scaleX(0.8200)">2</span>
<span class="t" style="left:49.00px;top:493.41px;line-height:29px;color:#8c909d;font-family:'Liberation Mono',monospace;font-size:25px;font-weight:normal;letter-spacing:0px;-webkit-text-stroke:.3px #8c909d;transform:scaleX(0.8200)">3</span>
</main>
</body>
</html>
